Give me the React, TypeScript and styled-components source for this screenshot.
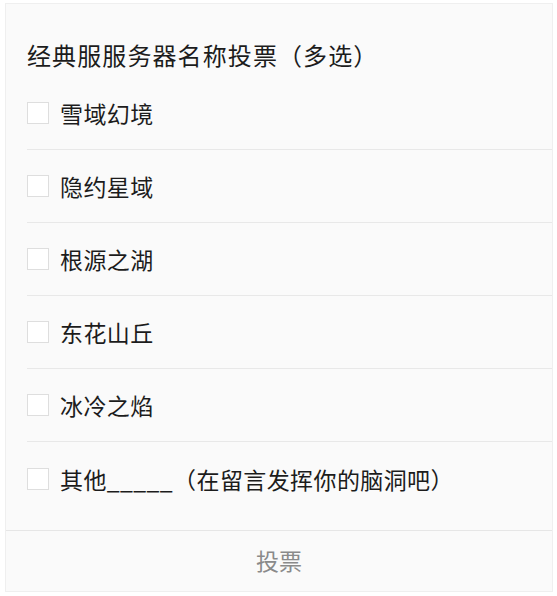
import styled, { createGlobalStyle } from "styled-components";

const GlobalStyle = createGlobalStyle`
  html, body {
    margin: 0;
    padding: 0;
    background: #ffffff;
  }
  body {
    font-family: "Noto Sans CJK SC", "Noto Sans", sans-serif;
  }
`;

const options = [
  "雪域幻境",
  "隐约星域",
  "根源之湖",
  "东花山丘",
  "冰冷之焰",
  "其他_____（在留言发挥你的脑洞吧）",
];

function App() {
  return (
    <Page>
      <GlobalStyle />
      <Card>
        <Title>经典服服务器名称投票（多选）</Title>
        <List>
          {options.map((label) => (
            <Option key={label}>
              <Box />
              <Label>{label}</Label>
            </Option>
          ))}
        </List>
        <VoteButton>投票</VoteButton>
      </Card>
    </Page>
  );
}

const Page = styled.div`
  width: 557px;
  height: 596px;
  padding: 3px 4px 4px 5px;
  box-sizing: border-box;
`;

const Card = styled.div`
  height: 100%;
  box-sizing: border-box;
  background: #fafafa;
  border: 1px solid #efefef;
  display: flex;
  flex-direction: column;
`;

const Title = styled.div`
  height: 73px;
  box-sizing: border-box;
  padding: 27px 0 0 21px;
  display: flex;
  align-items: center;
  font-size: 24px;
  color: #1c1c1c;
  letter-spacing: 1.1px;
`;

const List = styled.div`
  display: flex;
  flex-direction: column;
  padding-left: 21px;
  padding-bottom: 15px;
  border-bottom: 1px solid #e6e6e6;
`;

const Option = styled.div`
  height: 73px;
  box-sizing: border-box;
  display: flex;
  align-items: center;
  gap: 11px;
  border-bottom: 1px solid #e8e8e8;

  &:last-child {
    border-bottom: none;
  }
`;

const Box = styled.div`
  width: 22px;
  height: 22px;
  box-sizing: border-box;
  border: 1px solid #dedede;
  background: #ffffff;
  flex-shrink: 0;
`;

const Label = styled.div`
  font-size: 23px;
  color: #1c1c1c;
  letter-spacing: 0.4px;
`;

const VoteButton = styled.div`
  flex: 1;
  display: flex;
  align-items: center;
  justify-content: center;
  padding-bottom: 3px;
  font-size: 23px;
  color: #8a8a8a;
`;

export default App;
